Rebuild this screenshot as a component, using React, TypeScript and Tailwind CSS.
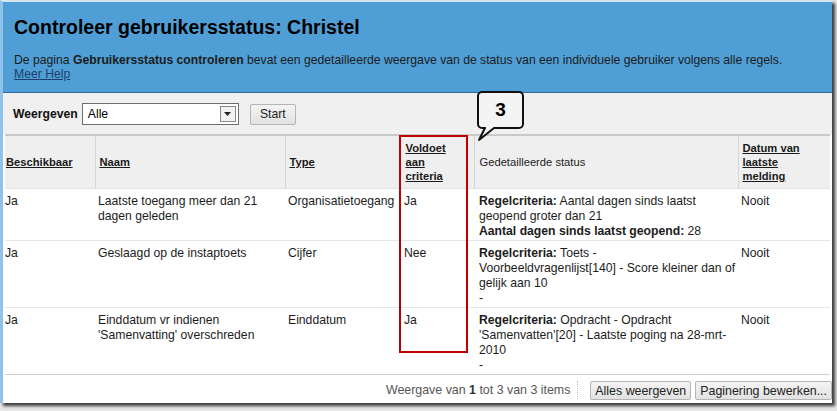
import React from 'react';

const font = "font-['Liberation_Sans',Arial,sans-serif]";

interface Row {
  beschikbaar: string;
  naam: string;
  type: string;
  voldoet: string;
  status: React.ReactNode;
  datum: string;
}

const rows: Row[] = [
  {
    beschikbaar: 'Ja',
    naam: 'Laatste toegang meer dan 21 dagen geleden',
    type: 'Organisatietoegang',
    voldoet: 'Ja',
    status: (
      <>
        <b>Regelcriteria:</b> Aantal dagen sinds laatst geopend groter dan 21
        <br />
        <b>Aantal dagen sinds laatst geopend:</b> 28
      </>
    ),
    datum: 'Nooit',
  },
  {
    beschikbaar: 'Ja',
    naam: 'Geslaagd op de instaptoets',
    type: 'Cijfer',
    voldoet: 'Nee',
    status: (
      <>
        <b>Regelcriteria:</b> Toets - Voorbeeldvragenlijst[140] - Score kleiner dan of gelijk aan 10
        <br />-
      </>
    ),
    datum: 'Nooit',
  },
  {
    beschikbaar: 'Ja',
    naam: "Einddatum vr indienen 'Samenvatting' overschreden",
    type: 'Einddatum',
    voldoet: 'Ja',
    status: (
      <>
        <b>Regelcriteria:</b> Opdracht - Opdracht 'Samenvatten'[20] - Laatste poging na 28-mrt-2010
        <br />-
      </>
    ),
    datum: 'Nooit',
  },
];

const cols = [90, 190, 115, 74, 264, 92];

const HeadLink: React.FC<{ children: React.ReactNode }> = ({ children }) => (
  <span className="font-bold underline text-[#1a1a1a]">{children}</span>
);

export default function App() {
  return (
    <div className={`${font} relative w-[837px] h-[411px] bg-[#e8e8e8] overflow-hidden`}>
      <div className="w-[832px] h-[403px] bg-white border-l-[3px] border-l-[#8fc3ea] border-t-2 border-t-[#d4e6f4] shadow-[3px_3px_3px_rgba(0,0,0,0.75)] flex flex-col">
        {/* header */}
        <div className="h-[91px] bg-[#4f9fd6] border-b border-[#2c6a9c] pl-[11px] pt-[13px]">
          <h1 className="text-[19.5px] leading-[24px] font-bold text-black">
            Controleer gebruikersstatus: Christel
          </h1>
          <p className="mt-[14px] text-[12.2px] leading-[14px] text-[#1c1c1c]">
            De pagina <b>Gebruikersstatus controleren</b> bevat een gedetailleerde weergave van de status van een individuele gebruiker volgens alle regels.
          </p>
          <a className="block text-[12.2px] leading-[14px] text-[#1e3f6e] underline">Meer Help</a>
        </div>

        {/* toolbar */}
        <div className="h-[41px] bg-[#f0f0f0] flex items-center pl-[10px] pt-[1px]">
          <span className="text-[12.2px] font-bold text-[#111]">Weergeven</span>
          <div className="ml-[4px] w-[157px] h-[22px] border border-[#6e6e6e] bg-white flex items-center justify-between pl-[5px] pr-[2px]">
            <span className="text-[12.2px] text-black">Alle</span>
            <div className="w-[16px] h-[16px] border border-[#8a8a8a] bg-[#f2f2f2] flex items-center justify-center">
              <svg width="7" height="4" viewBox="0 0 7 4">
                <path d="M0 0h7L3.5 4z" fill="#222" />
              </svg>
            </div>
          </div>
          <button className="ml-[11px] w-[46px] h-[21px] border border-[#b5b5b5] rounded-[2px] bg-gradient-to-b from-[#f4f4f4] to-[#e2e2e2] text-[12.2px] text-[#222]">
            Start
          </button>
        </div>

        {/* table */}
        <div className="border-t-2 border-[#c9c9c9] ml-[2px] w-[825px]">
          <table className="table-fixed border-collapse w-[825px] text-[12.2px] leading-[15px] text-[#1c1c1c]">
            <colgroup>
              {cols.map((w, i) => (
                <col key={i} style={{ width: w }} />
              ))}
            </colgroup>
            <thead>
              <tr className="h-[52px] bg-[#efefef] text-[11.2px] leading-[14px] border-b border-[#e2e2e2]">
                <th className="text-left font-normal align-middle pl-[1px] border-r border-[#d6d6d6]">
                  <HeadLink>Beschikbaar</HeadLink>
                </th>
                <th className="text-left font-normal align-middle pl-[4px] border-r border-[#d6d6d6]">
                  <HeadLink>Naam</HeadLink>
                </th>
                <th className="text-left font-normal align-middle pl-[4px] border-r border-[#d6d6d6]">
                  <HeadLink>Type</HeadLink>
                </th>
                <th className="text-left font-normal align-middle pl-[5px] pr-[14px] border-r border-[#d6d6d6]">
                  <HeadLink>Voldoet aan criteria</HeadLink>
                </th>
                <th className="text-left font-normal align-middle pl-[5px] border-r border-[#d6d6d6] text-[#222]">
                  Gedetailleerde status
                </th>
                <th className="text-left font-normal align-middle pl-[4px] pr-[10px]">
                  <HeadLink>Datum van laatste melding</HeadLink>
                </th>
              </tr>
            </thead>
            <tbody>
              {rows.map((r, i) => (
                <tr key={i} className={`border-b ${i === rows.length - 1 ? 'border-[#cfcfcf] h-[66px]' : 'border-[#e6e6e6]'}`}>
                  <td className="align-top pt-[5px] pb-[1px] pl-[0px]">{r.beschikbaar}</td>
                  <td className="align-top pt-[5px] pb-[1px] pl-[3px] pr-[10px]">{r.naam}</td>
                  <td className="align-top pt-[5px] pb-[1px] pl-[3px]">{r.type}</td>
                  <td className="align-top pt-[5px] pb-[1px] pl-[4px]">{r.voldoet}</td>
                  <td className="align-top pt-[5px] pb-[1px] pl-[5px] pr-[2px]">{r.status}</td>
                  <td className="align-top pt-[5px] pb-[1px] pl-[3px]">{r.datum}</td>
                </tr>
              ))}
            </tbody>
          </table>
        </div>

        {/* footer */}
        <div className="flex-1 flex items-center justify-end pr-[0px] pt-[3px] text-[12.4px]">
          <span className="text-[#555]">
            Weergave van <b className="text-[#333]">1</b> tot 3 van 3 items
          </span>
          <span className="ml-[7px] h-[18px] border-l border-dotted border-[#bbb]" />
          <button className="ml-[12px] h-[19px] px-[4px] border border-[#b5b5b5] rounded-[2px] bg-gradient-to-b from-[#f4f4f4] to-[#e2e2e2] text-[#222]">
            Alles weergeven
          </button>
          <button className="ml-[4px] h-[19px] px-[4px] border border-[#b5b5b5] rounded-[2px] bg-gradient-to-b from-[#f4f4f4] to-[#e2e2e2] text-[#222] whitespace-nowrap">
            Paginering bewerken...
          </button>
        </div>
      </div>

      {/* highlight overlay */}
      <div className="absolute left-[399px] top-[135px] w-[69px] h-[218px] border-2 border-[#c00000]" />

      {/* callout */}
      <div className="absolute left-[476px] top-[90px] w-[50px] h-[52px]">
        <svg width="50" height="52" viewBox="0 0 50 52" className="absolute inset-0">
          <path
            d="M6 2h37a4 4 0 0 1 4 4v28a4 4 0 0 1-4 4H18L3 50l6-12H6a4 4 0 0 1-4-4V6a4 4 0 0 1 4-4z"
            fill="#f4f4f4"
            stroke="#111"
            strokeWidth="2"
            strokeLinejoin="round"
          />
        </svg>
        <span className="absolute left-0 top-[9px] w-[49px] text-center text-[19px] leading-[22px] font-bold text-black">
          3
        </span>
      </div>
    </div>
  );
}
